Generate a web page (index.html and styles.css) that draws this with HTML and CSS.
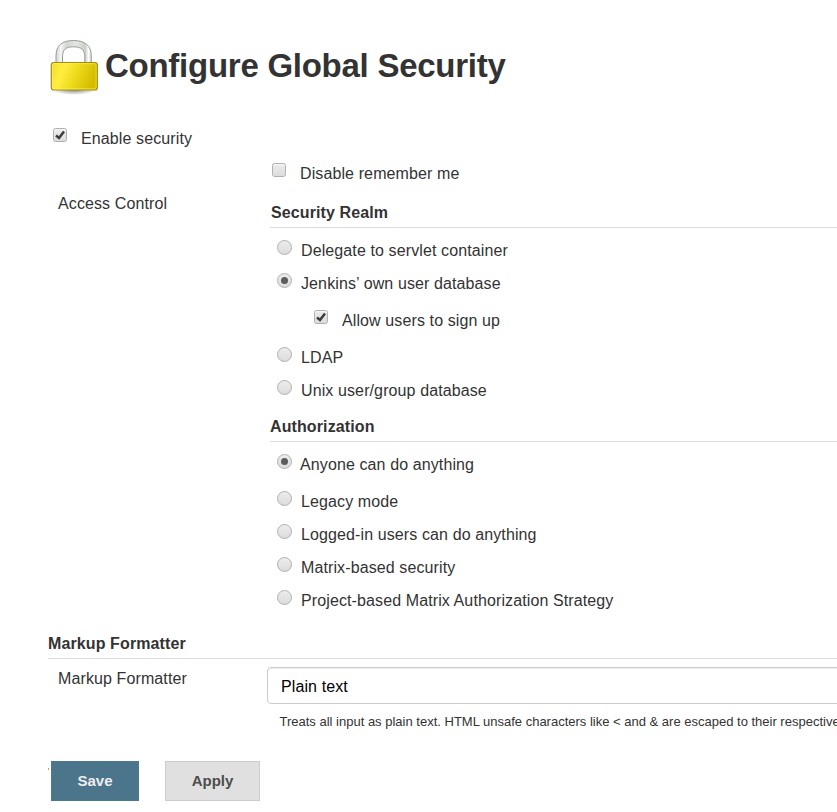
FILE: index.html
```html
<!DOCTYPE html>
<html lang="en">
<head>
<meta charset="utf-8">
<title>Configure Global Security</title>
<link rel="stylesheet" href="styles.css">
</head>
<body>
<form class="page">
  <h1 class="title">
    <svg class="lock" width="58" height="62" viewBox="0 0 58 62" aria-hidden="true">
      <defs>
        <linearGradient id="gold" x1="0" y1="0" x2="1" y2=".25"><stop offset="0" stop-color="#f2dc24"/><stop offset=".3" stop-color="#ffee40"/><stop offset=".6" stop-color="#eddb1c"/><stop offset="1" stop-color="#d6bd00"/></linearGradient>
        <linearGradient id="steel" x1="0" y1="0" x2="1" y2="0"><stop offset="0" stop-color="#d2d5d0"/><stop offset=".13" stop-color="#f4f5f4"/><stop offset=".3" stop-color="#d3d7d2"/><stop offset=".6" stop-color="#e3e6e2"/><stop offset=".83" stop-color="#c9cdc8"/><stop offset=".92" stop-color="#fff"/><stop offset="1" stop-color="#d0d3ce"/></linearGradient>
        <radialGradient id="shade"><stop offset="0" stop-color="#000" stop-opacity=".45"/><stop offset="1" stop-color="#000" stop-opacity="0"/></radialGradient>
      </defs>
      <ellipse cx="28" cy="54" rx="22" ry="5" fill="url(#shade)"/>
      <path d="M10 33V20C10 9.500 16 4.500 27.500 4.500S45.300 9.500 45.300 20V33H38.800V21C38.800 13.500 35 10.800 27.500 10.800S16.500 13.500 16.500 21V33Z" fill="url(#steel)" stroke="#9a9d98"/>
      <rect x="5.300" y="26.500" width="46" height="27.500" rx="2.500" fill="url(#gold)" stroke="#a28d12" stroke-width="1.200"/>
      <rect x="6.500" y="27.700" width="43.600" height="25.100" rx="1.500" fill="none" stroke="#fff46c" stroke-opacity=".55"/>
    </svg>
    <span>Configure Global Security</span>
  </h1>

  <label class="option enable"><i class="box checked"><svg viewBox="0 0 14 14"><path d="M3 7.500 6 10 11 3.500"/></svg></i><span>Enable security</span></label>

  <div class="settings">
    <div class="setting-name access">Access Control</div>
    <div class="controls">
      <label class="option remember"><i class="box"></i><span>Disable remember me</span></label>
      <h2 class="section realm">Security Realm</h2>
      <div class="choices">
        <label class="option"><i class="radio"></i><span>Delegate to servlet container</span></label>
        <label class="option"><i class="radio selected"></i><span>Jenkins’ own user database</span></label>
        <label class="option nested"><i class="box checked"><svg viewBox="0 0 14 14"><path d="M3 7.500 6 10 11 3.500"/></svg></i><span>Allow users to sign up</span></label>
        <label class="option"><i class="radio"></i><span>LDAP</span></label>
        <label class="option"><i class="radio"></i><span>Unix user/group database</span></label>
      </div>
      <h2 class="section">Authorization</h2>
      <div class="choices strategies">
        <label class="option first"><i class="radio selected"></i><span>Anyone can do anything</span></label>
        <label class="option"><i class="radio"></i><span>Legacy mode</span></label>
        <label class="option"><i class="radio"></i><span>Logged-in users can do anything</span></label>
        <label class="option"><i class="radio"></i><span>Matrix-based security</span></label>
        <label class="option"><i class="radio"></i><span>Project-based Matrix Authorization Strategy</span></label>
      </div>
    </div>
  </div>

  <h2 class="section">Markup Formatter</h2>
  <div class="settings">
    <div class="setting-name formatter">Markup Formatter</div>
    <div class="formatter-field">
      <div class="select">Plain text</div>
      <p class="help">Treats all input as plain text. HTML unsafe characters like &lt; and &amp; are escaped to their respective</p>
    </div>
  </div>

  <div class="actions">
    <i class="mark"></i>
    <button type="button" class="save">Save</button>
    <button type="button" class="apply">Apply</button>
  </div>
</form>
</body>
</html>
```
FILE: styles.css
```css
* { box-sizing: border-box; }
body {
  margin: 0;
  background: #fff;
  color: #333;
  font: 16px/18px "Liberation Sans", Arial, sans-serif;
  letter-spacing: .11px;
  overflow: hidden;
}
.page { height: 812px; padding: 36px 0 0 48px; overflow: hidden; }
.title {
  display: flex;
  align-items: flex-start;
  height: 62px;
  margin: 0;
  font-size: 33px;
  line-height: 40px;
  letter-spacing: -.26px;
  white-space: nowrap;
}
.title span { margin-top: 10px; }
.lock { flex: none; margin: 0 1px 0 -2px; }

.option { display: flex; height: 18px; white-space: nowrap; }
.box, .radio {
  flex: none;
  border: 1px solid #b0b0b0;
  background: linear-gradient(#ececec, #dcdcdc);
}
.box {
  width: 14px;
  height: 14px;
  margin: -2px 14px 0 0;
  border-radius: 2.5px;
  box-shadow: inset 0 1px 1px rgba(255, 255, 255, .6);
}
.box svg {
  display: block;
  width: 14px;
  height: 14px;
  margin: -1px;
  fill: none;
  stroke: #3c3c3c;
  stroke-width: 2.5;
}
.radio {
  display: grid;
  place-items: center;
  width: 15px;
  height: 15px;
  margin: -2px 9px 0 0;
  border-radius: 50%;
}
.selected::after {
  content: "";
  width: 7px;
  height: 7px;
  border-radius: 50%;
  background: #5c5c5c;
}
.enable { margin: 32px 0 0 5px; }

.settings { display: flex; }
.setting-name { flex: none; padding-left: 10px; }
.access { width: 222px; padding-top: 47px; }
.controls { flex: 1; min-width: 0; }
.remember { margin: 17px 0 0 2px; }
.section {
  height: 24px;
  margin: 0;
  border-bottom: 1px solid #ddd;
  font-size: 16px;
  line-height: 18px;
}
.realm { margin-top: 21px; padding-left: 1px; }
.choices { display: grid; gap: 15px; padding: 14px 0 18px 7px; }
.strategies { padding-bottom: 25px; }
.nested { margin: 4px 0 4px 37px; }
.first { margin-bottom: 4px; }
.first .radio { margin-right: 8px; }

.formatter { width: 219px; padding-top: 11px; }
.formatter-field { flex: 1; min-width: 0; padding-top: 8px; }
.select {
  width: 640px;
  height: 37px;
  padding: 10px 13px 8px;
  border: 1px solid #ccc;
  border-radius: 4px;
  box-shadow: inset 0 1px 1px rgba(0, 0, 0, .08);
  color: #000;
}
.help {
  margin: 10px 0 0 12.5px;
  font-size: 13px;
  line-height: 16px;
  letter-spacing: 0;
  white-space: nowrap;
}
.actions { display: flex; margin-top: 31px; }
.mark { width: 1px; height: 2px; margin: 7px 2px 0 0; background: #d99a4a; }
button {
  height: 40px;
  padding: 0;
  border: 1px solid;
  font: bold 15px/18px "Liberation Sans", Arial, sans-serif;
}
.save { width: 88px; border-color: #4a7a92; background: #4b758b; color: #eee; }
.apply { width: 95px; margin-left: 26px; border-color: #ccc; background: #e0e0e0; color: #4d4d4d; }
```
